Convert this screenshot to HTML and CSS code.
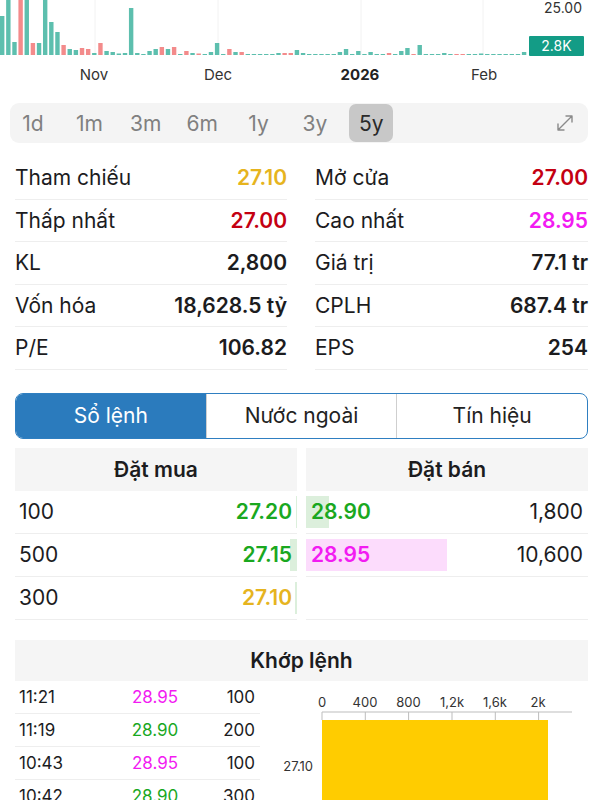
FILE: index.html
```html
<!DOCTYPE html>
<html lang="vi">
<head>
  <meta charset="UTF-8" />
  <meta name="viewport" content="width=device-width, initial-scale=1" />
  <title>Chi tiết cổ phiếu</title>
  <link rel="stylesheet" href="styles.css">
</head>
<body>
  <div class="price-chart">
    <svg id="volume-chart" width="600" height="90" viewBox="0 0 600 90">
      <g class="grid">
        <line x1="95" y1="0" x2="95" y2="55" />
        <line x1="218" y1="0" x2="218" y2="55" />
        <line x1="361" y1="0" x2="361" y2="55" />
        <line x1="483" y1="0" x2="483" y2="55" />
      </g>
      <g id="bars"></g>
      <text class="axis-price" x="582" y="13" text-anchor="end">25.00</text>
      <rect class="badge" x="529" y="36" width="55" height="20" rx="1" />
      <text class="badge-text" x="556.5" y="51" text-anchor="middle">2.8K</text>
      <text class="month" x="94" y="80" text-anchor="middle">Nov</text>
      <text class="month" x="218" y="80" text-anchor="middle">Dec</text>
      <text class="month year" x="360" y="80" text-anchor="middle">2026</text>
      <text class="month" x="484" y="80" text-anchor="middle">Feb</text>
    </svg>
  </div>

  <div class="range-bar">
    <button class="range">1d</button>
    <button class="range">1m</button>
    <button class="range">3m</button>
    <button class="range">6m</button>
    <button class="range">1y</button>
    <button class="range">3y</button>
    <button class="range active">5y</button>
    <svg class="expand" width="20" height="20" viewBox="0 0 20 20">
      <path d="M3 17 L17 3 M11 3 H17 V9 M3 11 V17 H9" />
    </svg>
  </div>

  <div class="stats">
    <div class="stat"><span>Tham chiếu</span><b class="ref">27.10</b></div>
    <div class="stat"><span>Mở cửa</span><b class="down">27.00</b></div>
    <div class="stat"><span>Thấp nhất</span><b class="down">27.00</b></div>
    <div class="stat"><span>Cao nhất</span><b class="ceil">28.95</b></div>
    <div class="stat"><span>KL</span><b>2,800</b></div>
    <div class="stat"><span>Giá trị</span><b>77.1 tr</b></div>
    <div class="stat"><span>Vốn hóa</span><b>18,628.5 tỷ</b></div>
    <div class="stat"><span>CPLH</span><b>687.4 tr</b></div>
    <div class="stat"><span>P/E</span><b>106.82</b></div>
    <div class="stat"><span>EPS</span><b>254</b></div>
  </div>

  <div class="segments">
    <div class="segment selected">Sổ lệnh</div>
    <div class="segment">Nước ngoài</div>
    <div class="segment">Tín hiệu</div>
  </div>

  <div class="book">
    <div class="side">
      <div class="side-head">Đặt mua</div>
      <div class="order bid">
        <i class="vol-bar buy" style="width: 1px"></i>
        <span>100</span><b class="up">27.20</b>
      </div>
      <div class="order bid">
        <i class="vol-bar buy" style="width: 7px"></i>
        <span>500</span><b class="up">27.15</b>
      </div>
      <div class="order bid">
        <i class="vol-bar buy" style="width: 2px"></i>
        <span>300</span><b class="ref">27.10</b>
      </div>
    </div>
    <div class="side">
      <div class="side-head">Đặt bán</div>
      <div class="order ask">
        <i class="vol-bar buy" style="width: 23px"></i>
        <b class="up">28.90</b><span>1,800</span>
      </div>
      <div class="order ask">
        <i class="vol-bar ceiling" style="width: 141px"></i>
        <b class="ceil">28.95</b><span>10,600</span>
      </div>
      <div class="order ask"></div>
    </div>
  </div>

  <div class="matched">
    <div class="side-head">Khớp lệnh</div>
    <div class="matched-body">
      <div class="trades">
        <div class="trade"><span>11:21</span><span class="ceil">28.95</span><span class="qty">100</span></div>
        <div class="trade"><span>11:19</span><span class="up">28.90</span><span class="qty">200</span></div>
        <div class="trade"><span>10:43</span><span class="ceil">28.95</span><span class="qty">100</span></div>
        <div class="trade"><span>10:42</span><span class="up">28.90</span><span class="qty">300</span></div>
      </div>
      <svg class="volume-profile" width="323" height="130" viewBox="0 0 323 130">
        <g class="tick-labels">
          <text x="57" y="26" text-anchor="middle">0</text>
          <text x="100" y="26" text-anchor="middle">400</text>
          <text x="143.5" y="26" text-anchor="middle">800</text>
          <text x="187" y="26" text-anchor="middle">1,2k</text>
          <text x="230" y="26" text-anchor="middle">1,6k</text>
          <text x="273" y="26" text-anchor="middle">2k</text>
        </g>
        <g class="ticks">
          <line x1="57" y1="31" x2="307" y2="31" />
          <line x1="57" y1="31" x2="57" y2="39" />
          <line x1="100.3" y1="31" x2="100.3" y2="39" />
          <line x1="143.6" y1="31" x2="143.6" y2="39" />
          <line x1="187" y1="31" x2="187" y2="39" />
          <line x1="230.3" y1="31" x2="230.3" y2="39" />
          <line x1="273.6" y1="31" x2="273.6" y2="39" />
        </g>
        <rect class="profile-bar" x="57" y="39" width="226" height="100" />
        <text class="profile-label" x="48" y="90" text-anchor="end">27.10</text>
      </svg>
    </div>
  </div>

  <script>
    // heights of the daily volume bars, oldest first ('r' = down day)
    const volumes = [
      [39,'g'],[65,'g'],[13,'g'],[65,'r'],[65,'g'],[12,'r'],[12,'g'],[65,'g'],[33,'g'],[23,'g'],
      [10,'r'],[6,'g'],[5,'g'],[7,'r'],[6,'r'],[2,'g'],[12,'r'],[4,'g'],[3,'g'],[1.5,'g'],
      [2,'g'],[47,'g'],[2,'g'],[1,'g'],[4,'g'],[6,'g'],[8,'r'],[6,'g'],[8,'r'],[1,'g'],
      [4,'r'],[2,'g'],[1.5,'r'],[1,'g'],[3,'g'],[12,'g'],[1,'g'],[6,'r'],[3,'g'],[3,'r'],
      [1,'g'],[1,'g'],[1,'g'],[1,'g'],[1,'g'],[2,'g'],[2,'r'],[2,'r'],[5,'g'],[2,'g'],
      [1,'g'],[1,'g'],[1,'g'],[1,'g'],[1,'g'],[3,'g'],[6,'g'],[1,'g'],[4,'g'],[1,'g'],
      [3,'g'],[1,'g'],[1,'g'],[2,'r'],[1,'g'],[4,'g'],[7,'g'],[1,'r'],[10,'g'],[1,'g'],
      [1,'g'],[1,'g'],[2,'g'],[1,'g'],[1,'r'],[1,'r'],[1,'g'],[1,'g'],[1.5,'g'],[1,'g'],
      [1,'g'],[1,'g'],[1,'g'],[1,'g'],[1,'g'],[3,'g']
    ];

    const group = document.getElementById("bars");
    const NS = "http://www.w3.org/2000/svg";
    volumes.forEach(([h, dir], i) => {
      const rect = document.createElementNS(NS, "rect");
      rect.setAttribute("x", (i * 6.14).toFixed(2));
      rect.setAttribute("y", 55 - h);
      rect.setAttribute("width", 4.4);
      rect.setAttribute("height", h);
      rect.setAttribute("class", dir === "r" ? "bar-down" : "bar-up");
      group.appendChild(rect);
    });
  </script>
</body>
</html>
```

FILE: styles.css
```css
body {
  margin: 0;
  width: 600px;
  height: 800px;
  overflow: hidden;
  background-color: #fff;
  color: #1c1c1e;
  font-family: "Inter", "Noto Sans", sans-serif;
}
b {
  font-weight: 600;
}
.price-chart svg {
  display: block;
}
.grid line {
  stroke: #f2f2f2;
  stroke-width: 1;
}
.bar-up {
  fill: #5dbfae;
}
.bar-down {
  fill: #f38b8b;
}
.axis-price {
  font-size: 14px;
  fill: #333;
}
.badge {
  fill: #139c86;
}
.badge-text {
  font-size: 14px;
  fill: #fff;
}
.month {
  font-size: 15px;
  fill: #333;
}
.month.year {
  font-weight: 700;
  fill: #222;
}

/* time range selector */
.range-bar {
  display: flex;
  align-items: center;
  gap: 12.4px;
  height: 40px;
  margin: 13px 12px 0 10px;
  padding: 0 1px;
  background-color: #f4f4f4;
  border-radius: 9px;
}
.range {
  width: 44px;
  height: 38px;
  padding: 0;
  border: none;
  border-radius: 7px;
  background: none;
  color: #808080;
  font-family: inherit;
  font-size: 21px;
}
.range.active {
  background-color: #c8c8c8;
  color: #2a2a2a;
}
.expand {
  margin-left: auto;
  margin-right: 12px;
}
.expand path {
  fill: none;
  stroke: #8a8a8a;
  stroke-width: 1.4;
  stroke-linecap: round;
  stroke-linejoin: round;
}

/* key numbers */
.stats {
  display: grid;
  grid-template-columns: 272px 273px;
  column-gap: 28px;
  margin-top: 14px;
  padding-left: 15px;
}
.stat {
  display: flex;
  align-items: center;
  justify-content: space-between;
  height: 42.5px;
  box-sizing: border-box;
  border-bottom: 1px solid #eeeeee;
  font-size: 21px;
}
.stat b {
  font-size: 21px;
}
.ref {
  color: #e6b41e;
}
.down {
  color: #c40012;
}
.ceil {
  color: #f21bf2;
}
.up {
  color: #1aa81f;
}

/* tabs */
.segments {
  display: flex;
  margin: 23px 12px 0 15px;
  height: 46px;
  border: 1.5px solid #2f7fc1;
  border-radius: 8px;
  overflow: hidden;
  box-sizing: border-box;
}
.segment {
  flex: 1;
  display: flex;
  align-items: center;
  justify-content: center;
  font-size: 21px;
  color: #222;
}
.segment + .segment {
  border-left: 1px solid #cfcfcf;
}
.segment.selected {
  background-color: #2b7bbd;
  color: #fff;
}

/* order book */
.book {
  display: flex;
  gap: 9px;
  margin: 9px 12px 0 15px;
}
.side {
  flex: 1;
}
.side-head {
  height: 43px;
  display: flex;
  align-items: center;
  justify-content: center;
  background-color: #f5f5f5;
  font-size: 21px;
  font-weight: 600;
}
.order {
  position: relative;
  display: flex;
  align-items: center;
  justify-content: space-between;
  height: 42.5px;
  box-sizing: border-box;
  margin-top: 0.5px;
  border-bottom: 1px solid #eeeeee;
  padding: 0 5px 0 4px;
  font-size: 21px;
}
.order span,
.order b {
  position: relative;
}
.order.ask {
  padding: 0 5px 0 5px;
}
.order .vol-bar {
  position: absolute;
  top: 5px;
  bottom: 5px;
}
.bid .vol-bar {
  right: 0;
}
.ask .vol-bar {
  left: 0;
}
.vol-bar.buy {
  background-color: #dcefdc;
}
.vol-bar.ceiling {
  background-color: #fcdcfc;
}

/* matched trades */
.matched {
  margin: 20px 12px 0 15px;
}
.matched .side-head {
  height: 41px;
}
.matched-body {
  display: flex;
}
.trades {
  width: 245px;
  flex-shrink: 0;
}
.trade {
  display: grid;
  grid-template-columns: 95px 82px 1fr;
  align-items: center;
  height: 33px;
  box-sizing: border-box;
  padding: 0 5px 0 4px;
  border-bottom: 1px solid #eeeeee;
  font-size: 17px;
}
.trade span:nth-child(2) {
  text-align: center;
}
.trade .qty {
  text-align: right;
}
.volume-profile {
  display: block;
  flex-shrink: 0;
  margin-left: 5px;
}
.tick-labels text,
.profile-label {
  font-size: 13px;
  fill: #333;
}
.ticks line {
  stroke: #bdbdbd;
  stroke-width: 1;
}
.profile-bar {
  fill: #ffcc00;
}
```
